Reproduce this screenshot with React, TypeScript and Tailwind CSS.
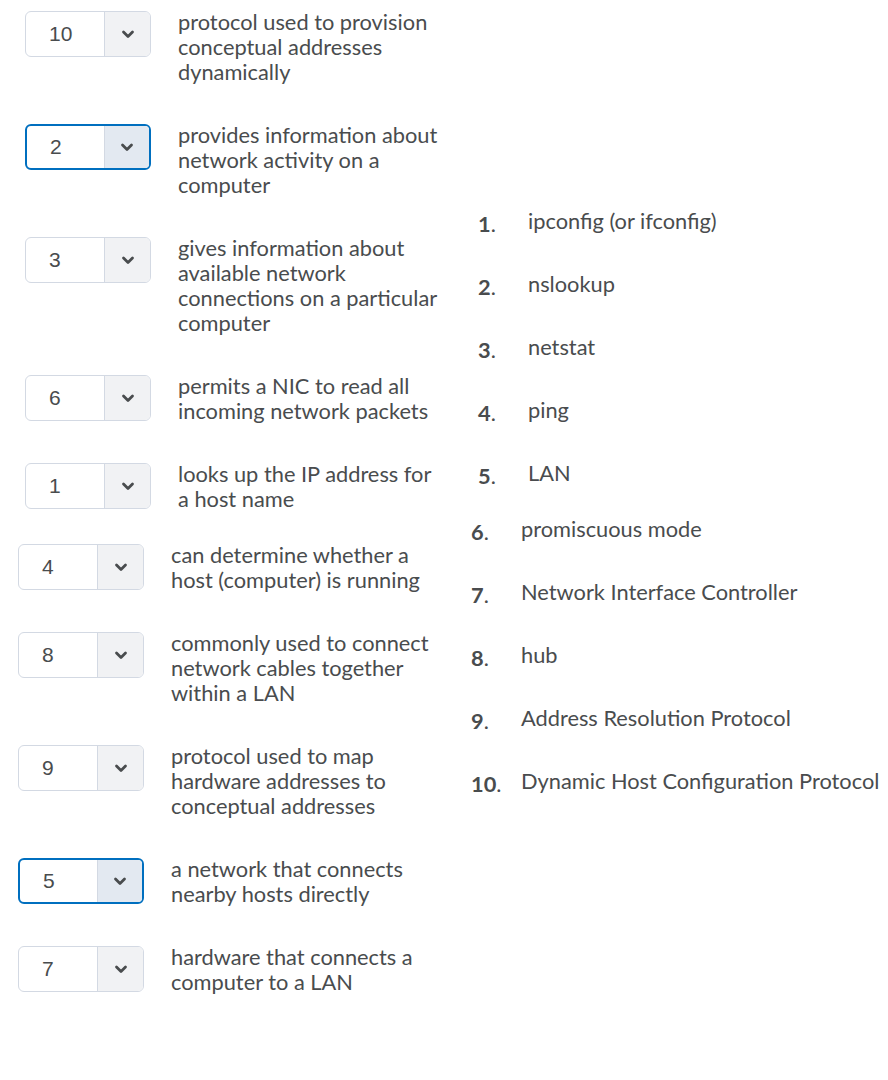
const TOP = [
  { value: '10', text: 'protocol used to provision conceptual addresses dynamically' },
  { value: '2', text: 'provides information about network activity on a computer', focused: true },
  { value: '3', text: 'gives information about available network connections on a particular computer' },
  { value: '6', text: 'permits a NIC to read all incoming network packets' },
  { value: '1', text: 'looks up the IP address for a host name' },
]

const BOTTOM = [
  { value: '4', text: 'can determine whether a host (computer) is running' },
  { value: '8', text: 'commonly used to connect network cables together within a LAN' },
  { value: '9', text: 'protocol used to map hardware addresses to conceptual addresses' },
  { value: '5', text: 'a network that connects nearby hosts directly', focused: true },
  { value: '7', text: 'hardware that connects a computer to a LAN' },
]

const CHOICES = [
  'ipconfig (or ifconfig)',
  'nslookup',
  'netstat',
  'ping',
  'LAN',
  'promiscuous mode',
  'Network Interface Controller',
  'hub',
  'Address Resolution Protocol',
  'Dynamic Host Configuration Protocol',
]

type Row = { value: string; text: string; focused?: boolean }

function Chevron() {
  return (
    <svg width="14" height="9" viewBox="0 0 14 9" fill="none">
      <path d="M2.5 2l4.5 4.5 4.5-4.5" stroke="#494c4e" strokeWidth="2.8" strokeLinecap="round" strokeLinejoin="round" />
    </svg>
  )
}

function Select({ value, focused }: { value: string; focused?: boolean }) {
  return (
    <div
      className={
        focused
          ? 'flex h-[46px] w-[126px] shrink-0 overflow-hidden rounded-[6px] border-2 border-[#006fbf] bg-white'
          : 'flex h-[46px] w-[126px] shrink-0 overflow-hidden rounded-[6px] border border-[#d3d9e3] bg-white'
      }
    >
      <div className="flex flex-1 items-center pl-[23px] font-['Liberation_Sans',sans-serif] text-[21px] text-[#494c4e]">
        {value}
      </div>
      <div
        className={
          focused
            ? 'flex w-[45px] items-center justify-center border-l border-[#d3d9e3] bg-[#e3e9f1]'
            : 'flex w-[46px] items-center justify-center border-l border-[#d3d9e3] bg-[#f1f2f4]'
        }
      >
        <Chevron />
      </div>
    </div>
  )
}

function MatchRow({ row }: { row: Row }) {
  return (
    <div className="flex items-start gap-[27px]">
      <Select value={row.value} focused={row.focused} />
      <p className="w-[265px] -translate-y-[2px] text-[21.8px] leading-[25px] text-[#494c4e]">{row.text}</p>
    </div>
  )
}

function Choice({ n, label }: { n: number; label: string }) {
  return (
    <div className="flex items-start">
      <span className="w-[50px] shrink-0 translate-y-[3px] text-[21.8px] leading-[25px] text-[#494c4e]">
        <span className="font-bold">{n}</span>.
      </span>
      <span className="whitespace-nowrap text-[21.8px] leading-[25px] text-[#494c4e]">{label}</span>
    </div>
  )
}

export default function App() {
  return (
    <div className="h-[1080px] w-[888px] overflow-hidden bg-white font-['Lato',sans-serif]">
      <div className="flex pl-[25px]">
        <div className="flex w-[453px] flex-col gap-[38px] pt-[11px] pb-[5px]">
          {TOP.map((r) => (
            <MatchRow key={r.value} row={r} />
          ))}
        </div>
        <div className="flex flex-col gap-[38px] pt-[208px]">
          {CHOICES.slice(0, 5).map((c, i) => (
            <Choice key={c} n={i + 1} label={c} />
          ))}
        </div>
      </div>
      <div className="flex pl-[18px]">
        <div className="flex w-[453px] flex-col gap-[38px] pt-[26px]">
          {BOTTOM.map((r) => (
            <MatchRow key={r.value} row={r} />
          ))}
        </div>
        <div className="-mt-[2px] flex flex-col gap-[38px]">
          {CHOICES.slice(5).map((c, i) => (
            <Choice key={c} n={i + 6} label={c} />
          ))}
        </div>
      </div>
    </div>
  )
}
